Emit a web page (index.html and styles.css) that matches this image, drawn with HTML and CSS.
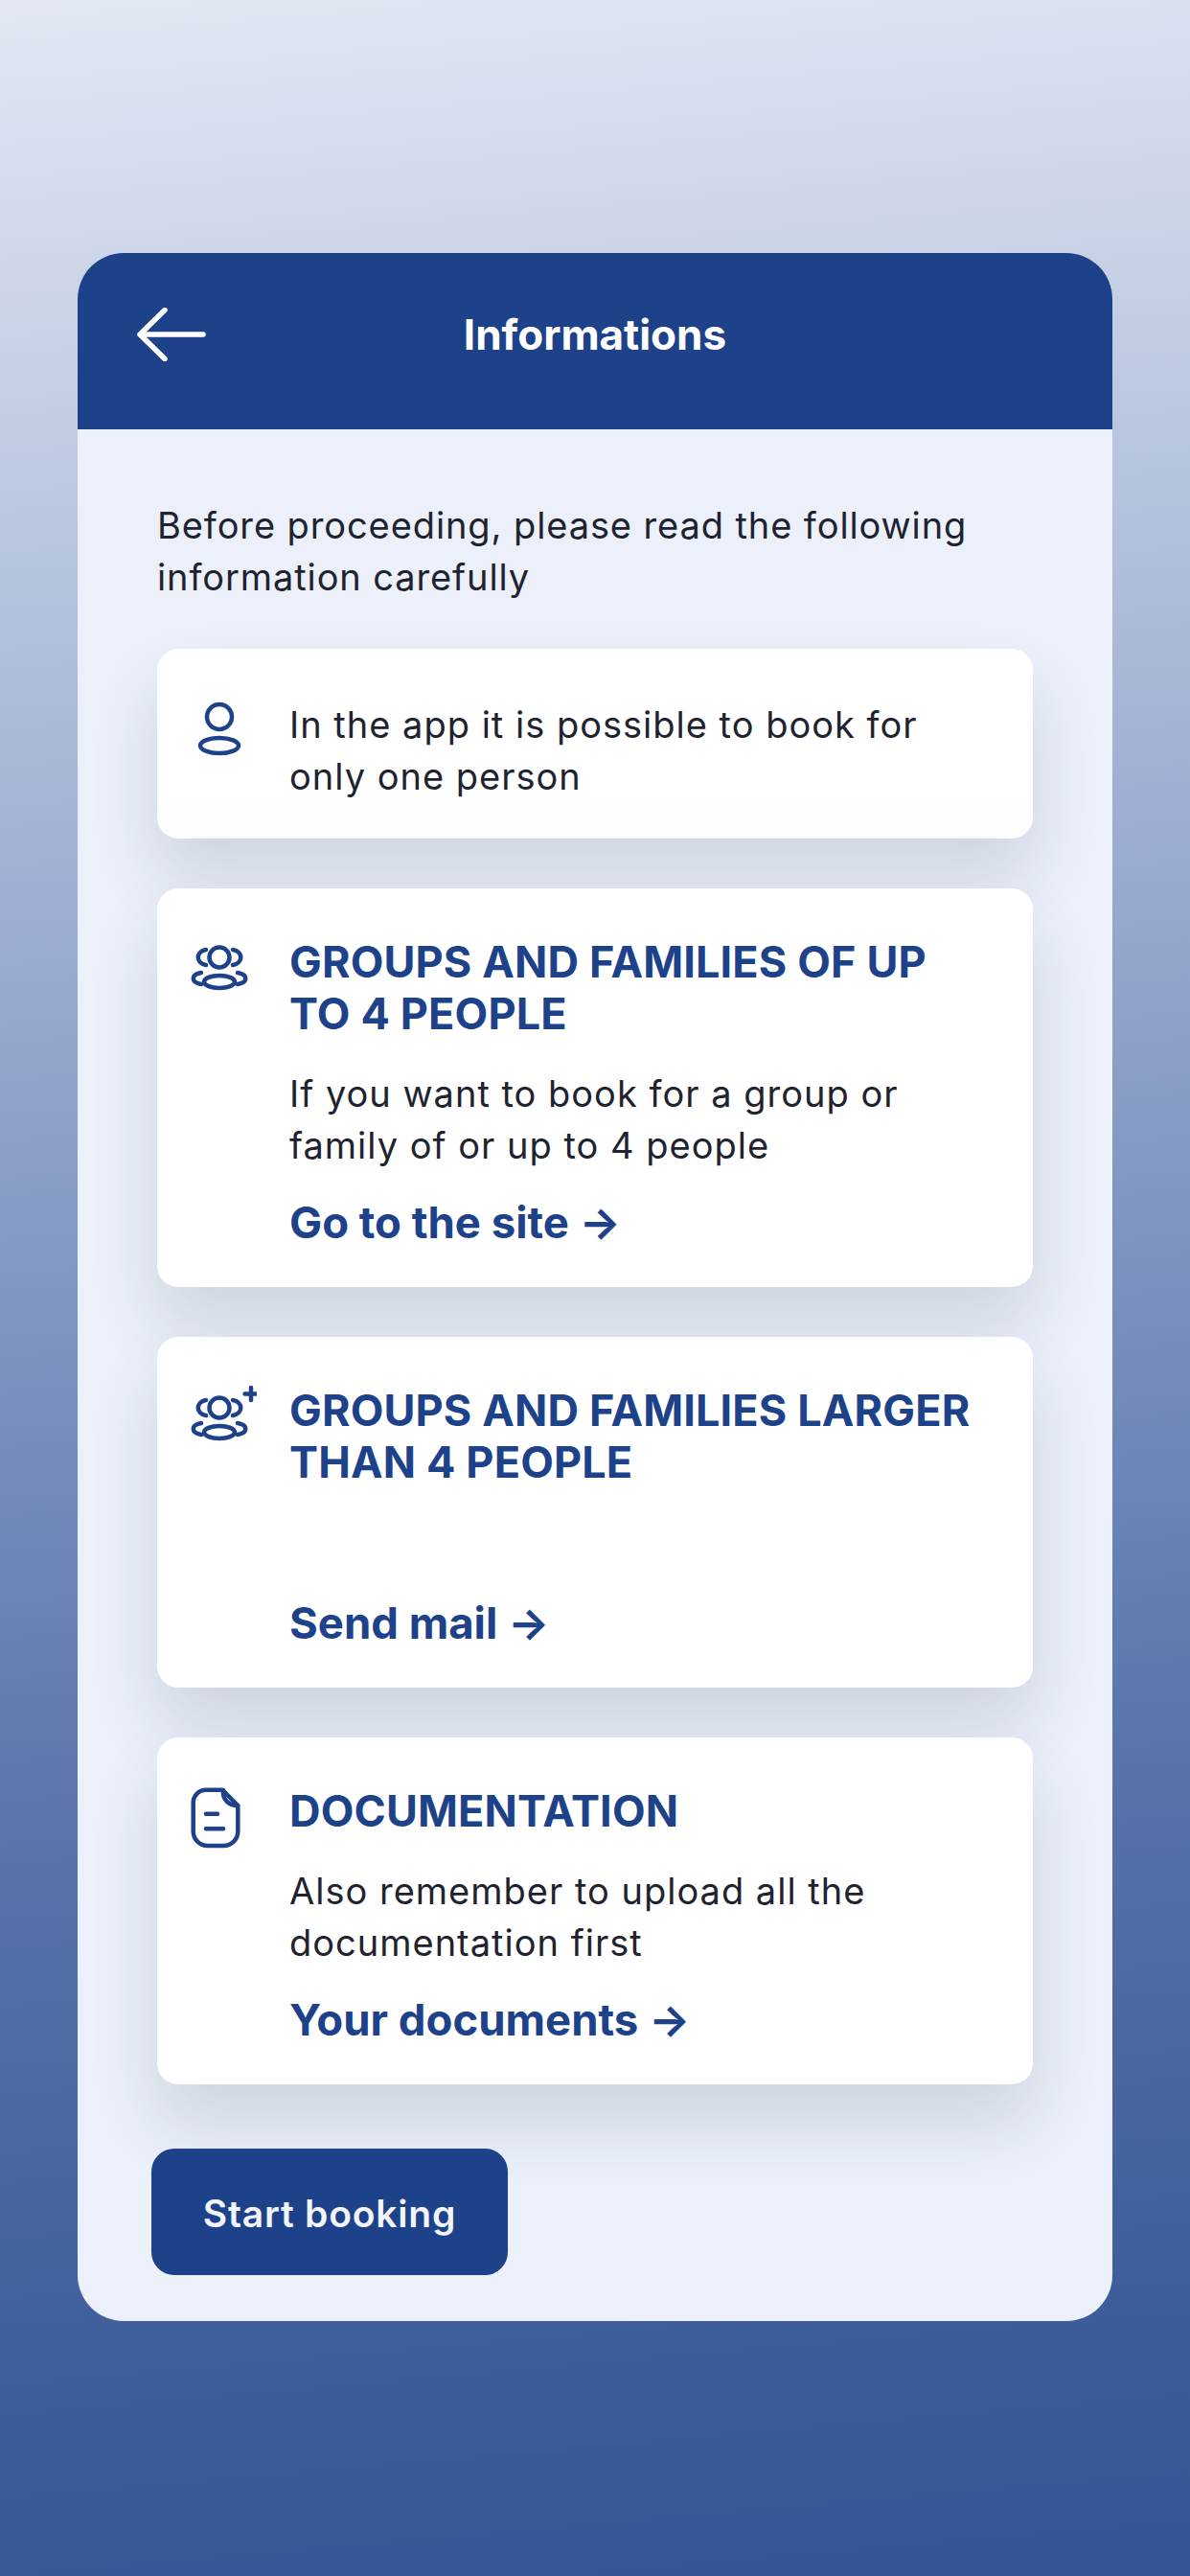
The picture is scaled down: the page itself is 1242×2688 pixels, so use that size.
FILE: index.html
```html
<!DOCTYPE html>
<html>

<head>
    <meta charset="utf-8">
    <title>Informations</title>
    <link rel="stylesheet" href="styles.css">
</head>

<body>
    <main class="panel">
        <header class="panel-head">
            <svg class="back" viewBox="0 0 72 56" width="72" height="56">
                <path d="M3 28H69M29 2.500L3 28L29 53.500" />
            </svg>
            <h1>Informations</h1>
        </header>
        <div class="panel-body">
            <p class="intro">Before proceeding, please read the following information carefully</p>

            <section class="card card-short">
                <svg class="icon" viewBox="0 0 72 72" width="72" height="72">
                    <circle cx="33" cy="21" r="13" />
                    <ellipse cx="33" cy="51" rx="20" ry="8" />
                </svg>
                <div class="card-text">
                    <p>In the app it is possible to book for only one person</p>
                </div>
            </section>

            <section class="card">
                <svg class="icon" viewBox="0 0 72 72" width="72" height="72">
                    <circle cx="33" cy="22" r="10.500" />
                    <ellipse cx="33" cy="47.500" rx="16" ry="6.500" />
                    <path d="M19 14C8 16 8 28 19 30M47 14C58 16 58 28 47 30" />
                    <path d="M14 38C3 40 3 48 14 50M52 38C63 40 63 48 52 50" />
                </svg>
                <div class="card-text">
                    <h2>GROUPS AND FAMILIES OF UP TO 4 PEOPLE</h2>
                    <p>If you want to book for a group or family of or up to 4 people</p>
                    <a class="link" href="#">Go to the site →</a>
                </div>
            </section>

            <section class="card">
                <svg class="icon" viewBox="0 0 72 72" width="72" height="72">
                    <circle cx="33" cy="24" r="10.500" />
                    <ellipse cx="33" cy="49.500" rx="16" ry="6.500" />
                    <path d="M19 16C8 18 8 30 19 32M47 16C58 18 58 30 47 32" />
                    <path d="M14 40C3 42 3 50 14 52M52 40C63 42 63 50 52 52" />
                    <path d="M66 3V16M59.500 9.500H72" />
                </svg>
                <div class="card-text">
                    <h2>GROUPS AND FAMILIES LARGER THAN 4 PEOPLE</h2>
                    <p class="blank"></p>
                    <a class="link" href="#">Send mail →</a>
                </div>
            </section>

            <section class="card">
                <svg class="icon" viewBox="0 0 72 72" width="72" height="72">
                    <path d="M19 4.700H36L52.300 21V48A15 15 0 0 1 37.300 63H20.700A15 15 0 0 1 5.700 48V18A13.300 13.300 0 0 1 19 4.700Z" />
                    <path d="M37 5C36 14 42 21 52 21" />
                    <path d="M19 29.700H31M19 45.300H37" />
                </svg>
                <div class="card-text">
                    <h2>DOCUMENTATION</h2>
                    <p>Also remember to upload all the documentation first</p>
                    <a class="link" href="#">Your documents →</a>
                </div>
            </section>

            <button class="start">Start booking</button>
        </div>
    </main>
</body>

</html>
```

FILE: styles.css
```css
* {
    box-sizing: border-box;
}

html,
body {
    margin: 0;
    height: 2688px;
}

body {
    padding: 264px 81px 0;
    overflow: hidden;
    background: linear-gradient(175deg, #e2e7f3 0%, #ced7e9 10%, #a5b5d5 30%, #7d93c0 50%, #5873aa 70%, #3d5c9a 90%, #335496 100%);
    font-family: Inter, "Liberation Sans", sans-serif;
    color: #1f2330;
}

.panel {
    height: 2158px;
    border-radius: 48px;
    background-color: #ebf0fa;
    overflow: hidden;
}

.panel-head {
    display: grid;
    grid-template-columns: 1fr auto 1fr;
    align-items: center;
    height: 184px;
    padding: 0 62px 14px;
    background-color: #1d428a;
    color: #fff;
}

.panel-head h1 {
    margin: 0;
    font-size: 44px;
    font-weight: 700;
}

.back {
    fill: none;
    stroke: #fff;
    stroke-width: 5.500;
    stroke-linecap: round;
    stroke-linejoin: round;
}

.panel-body {
    padding: 73px 83px 0;
}

.intro {
    margin: 0 0 48px;
    font-size: 38px;
    line-height: 54px;
    letter-spacing: 0.9px;
}

.card {
    display: flex;
    margin-bottom: 52px;
    padding: 50px 34px 0 32px;
    min-height: 198px;
    border-radius: 22px;
    background-color: #fff;
    box-shadow: 0 40px 70px rgba(30, 40, 70, 0.14);
}

.icon {
    flex: none;
    margin-right: 34px;
    fill: none;
    stroke: #1d428a;
    stroke-width: 4.500;
    stroke-linecap: round;
    stroke-linejoin: round;
}

.card-text {
    padding-bottom: 40px;
}

.card-short {
    padding-top: 0;
    align-items: center;
    background-image: linear-gradient(#fff 75%, #fcfcfd);
}

.card-short .icon {
    align-self: flex-start;
    margin-top: 50px;
}

.card-short .card-text {
    padding: 14px 0 0;
}

.card h2 {
    margin: 0 0 29px;
    max-width: 722px;
    font-size: 45px;
    line-height: 54px;
    font-weight: 700;
    letter-spacing: 0.15px;
    color: #1d428a;
}

.card p {
    margin: 0;
    font-size: 38px;
    line-height: 54px;
    letter-spacing: 1px;
}

.card .blank {
    min-height: 58px;
}

.link {
    display: block;
    margin-top: 27px;
    font-size: 45.500px;
    line-height: 54px;
    font-weight: 700;
    color: #1d428a;
    text-decoration: none;
}

.start {
    display: block;
    width: 372px;
    height: 132px;
    margin: 67px 0 0 -6px;
    padding-top: 4px;
    border: 0;
    border-radius: 24px;
    background-color: #1d428a;
    color: #f2f5fb;
    font-family: inherit;
    font-size: 39px;
    font-weight: 600;
    letter-spacing: 0.8px;
}
```
